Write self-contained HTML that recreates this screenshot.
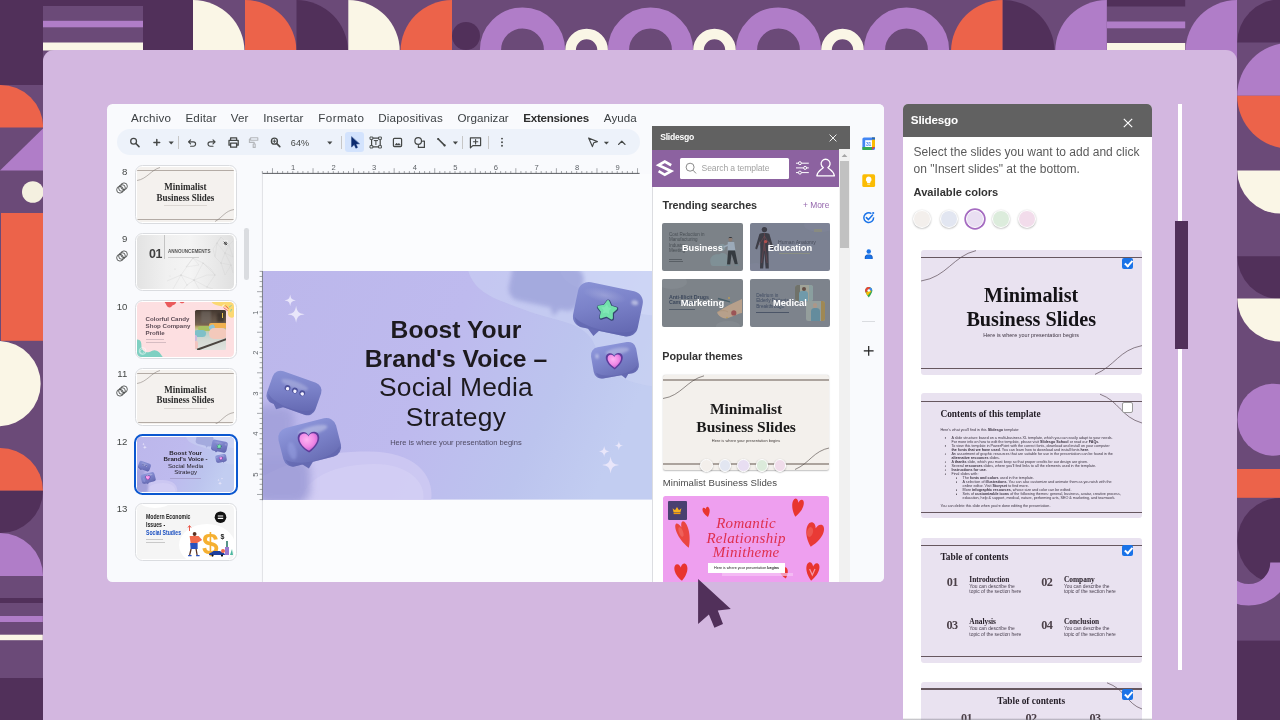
<!DOCTYPE html>
<html>
<head>
<meta charset="utf-8">
<title>Slidesgo add-on</title>
<style>
*{box-sizing:border-box;margin:0;padding:0}
html,body{width:1280px;height:720px;overflow:hidden;background:#6b4a78;font-family:"Liberation Sans",sans-serif;}
#stage{position:absolute;left:0;top:0;width:1280px;height:720px;overflow:hidden;will-change:transform}
.abs{position:absolute}
#bg{position:absolute;left:0;top:0}
#panel{position:absolute;left:43.1px;top:50px;width:1193.9px;height:680px;background:#d3b7e0;border-radius:11px 11px 0 0}
#card{position:absolute;left:107px;top:104px;width:777px;height:478px;background:#f9fafd;border-radius:5.5px;overflow:hidden}
#rpanel{position:absolute;left:903px;top:103.5px;width:249px;height:620px;background:#fff;border-radius:5px 5px 0 0;overflow:hidden}
.menu span{position:absolute;top:7.4px;font-size:11.6px;color:#3c4043;white-space:nowrap;letter-spacing:0.1px}
.tsep{position:absolute;top:32px;width:0.8px;height:13px;background:#c7c7c7}
.snum{position:absolute;font-size:9.6px;color:#444746;text-align:right}
.thumb{position:absolute;left:27.8px;width:101.8px;height:58.8px;border:0.9px solid #dadce0;border-radius:7.5px;background:#fff}
.thumb.sel{left:26.6px;width:104.2px;height:61.2px;border:2.1px solid #0b57d0;border-radius:8.5px}
.tin{position:absolute;left:1.6px;top:1.2px;width:96.8px;height:54.6px;border-radius:4.5px;overflow:hidden}
.thumb.sel .tin{left:1.6px;top:1.2px}
.mt{font-family:"Liberation Serif",serif;font-weight:bold;text-align:center;font-size:9.7px;line-height:10.6px;color:#2a2a2a;white-space:nowrap;transform:scaleX(0.93)}
.mt2{font-family:"Liberation Serif",serif;font-weight:bold;text-align:center;font-size:15.5px;line-height:18.3px;color:#1b1b1b;white-space:nowrap}
.cond{font-size:7.6px;font-weight:bold;white-space:nowrap;transform:scaleX(0.675);transform-origin:0 0}
.rnum{position:absolute;width:10px;text-align:center;font-size:7.6px;color:#5f6368}
.rnum.v{transform:rotate(-90deg);width:10px}
.stitle{text-align:center;font-size:24.7px;line-height:28.6px;color:#1d1a1f;white-space:nowrap}
.stitle .reg{font-size:26.4px;letter-spacing:0.25px}
.sh{font-size:10.8px;font-weight:bold;color:#333;white-space:nowrap;letter-spacing:-0.05px}
.tcard{position:absolute;width:80.8px;height:48px;border-radius:2px;overflow:hidden;margin-top:-0.2px}
.tcard > *:not(span){opacity:.8}
.tcard span{position:absolute;left:0;top:0.9px;width:100%;line-height:48px;text-align:center;font-size:9.3px;font-weight:bold;color:#fff;letter-spacing:-0.05px}
.cdot{position:absolute;top:355.3px;width:12.4px;height:12.4px;border-radius:50%;border:1.4px solid #fff;box-shadow:0 0.5px 1.5px rgba(0,0,0,0.3)}
.rom{font-family:"Liberation Serif",serif;font-style:italic;text-align:center;font-size:15px;line-height:14.8px;color:#df2f4e;white-space:nowrap;letter-spacing:0.3px}
.rdot{position:absolute;top:106.6px;width:18px;height:18px;border-radius:50%;border:1.8px solid #fff;box-shadow:0 0.6px 2px rgba(0,0,0,0.32)}
.rdot.selr{box-shadow:0 0 0 1.7px #a56cc1}
.rs{position:absolute;left:17.8px;width:220.8px;height:124.6px;border-radius:3px;background:#e9e2f0;overflow:hidden}
.rs .ln{position:absolute;left:0;width:100%;height:1.2px;background:#66575f}
.big{font-family:"Liberation Serif",serif;font-weight:bold;text-align:center;font-size:20.2px;line-height:23.8px;color:#141216;white-space:nowrap}
.ttl{font-family:"Liberation Serif",serif;font-weight:bold;font-size:9.4px;color:#231d26;white-space:nowrap}
.tiny{font-size:3.7px;color:#3a3240;white-space:nowrap;line-height:4px}
.nn{font-family:"Liberation Serif",serif;font-weight:bold;font-size:12.2px;letter-spacing:-0.6px;color:#4c4149}
.hh{font-family:"Liberation Serif",serif;font-weight:bold;font-size:7.4px;color:#2a222c;white-space:nowrap}
.dd{font-size:4.9px;line-height:5.5px;color:#4a4150;white-space:nowrap}
.cb{position:absolute;left:201.4px;width:11.2px;height:11.2px;border-radius:2px;background:#fff;border:1px solid #9a9a9a}
.cb.on{background:#1a73e8;border:none}
.cb.on:after{content:"";position:absolute;left:3.5px;top:1px;width:3.4px;height:6.4px;border:solid #fff;border-width:0 2px 2px 0;transform:rotate(42deg)}

</style>
</head>
<body>
<div id="stage">
<svg id="bg" width="1280" height="720" viewBox="0 0 1280 720">
<rect width="1280" height="720" fill="#6b4a78"/>
<!-- top strip -->
<rect x="0" y="0" width="43" height="85" fill="#51305a"/>
<rect x="43" y="0" width="100" height="6" fill="#51305a"/>
<rect x="43" y="20.8" width="100" height="6.5" fill="#b07dc8"/>
<rect x="43" y="42.5" width="100" height="8" fill="#faf6e6"/>
<rect x="143" y="0" width="50" height="52" fill="#51305a"/>
<path d="M193 0 A51.5 51.5 0 0 1 244.5 51.5 L193 51.5Z" fill="#faf6e6"/>
<path d="M245 0 A51.5 51.5 0 0 1 296.5 51.5 L245 51.5Z" fill="#ec634a"/>
<path d="M296.5 0 A51.5 51.5 0 0 1 348 51.5 L296.5 51.5Z" fill="#51305a"/>
<path d="M348.3 0 A51.5 51.5 0 0 1 399.8 51.5 L348.3 51.5Z" fill="#faf6e6"/>
<path d="M452 0 A51.5 51.5 0 0 0 400.5 51.5 L452 51.5Z" fill="#ec634a"/>
<circle cx="466" cy="36" r="14" fill="#51305a"/>
<g fill="none" stroke="#b07dc8" stroke-width="21.2">
<circle cx="522.5" cy="50" r="32"/><circle cx="650.5" cy="50" r="32"/><circle cx="778.5" cy="50" r="32"/><circle cx="906.5" cy="50" r="32"/>
</g>
<g fill="none" stroke="#faf6e6" stroke-width="10.6">
<circle cx="586.6" cy="50" r="16"/><circle cx="714.5" cy="50" r="16"/><circle cx="842.5" cy="50" r="16"/>
</g>
<path d="M1002.6 0 A51.5 51.5 0 0 0 951 51.5 L1002.6 51.5Z" fill="#ec634a"/>
<path d="M1002.8 0 A51.5 51.5 0 0 1 1054.5 51.5 L1002.8 51.5Z" fill="#51305a"/>
<path d="M1106.8 0 A51.5 51.5 0 0 0 1055.2 51.5 L1106.8 51.5Z" fill="#b07dc8"/>
<rect x="1107" y="0" width="78.2" height="6.5" fill="#51305a"/>
<rect x="1107" y="21.5" width="78.2" height="6.8" fill="#b07dc8"/>
<rect x="1107" y="43" width="78.2" height="8" fill="#faf6e6"/>
<path d="M1237 0 A51.5 51.5 0 0 0 1185.5 51.5 L1185.5 62 L1237 62Z" fill="#b07dc8"/>
<!-- right strip -->
<path d="M1280 -0.5 A43 43 0 0 0 1237.3 42.5 L1280 42.5Z" fill="#51305a"/>
<path d="M1237.2 95.8 A53 53 0 0 1 1343.2 95.8Z" fill="#b07dc8"/>
<path d="M1237.2 95.8 A53 53 0 0 0 1343.2 95.8Z" fill="#ec634a"/>
<path d="M1237.3 170.4 A43 43 0 0 0 1280.3 213.4 L1280.3 170.4Z" fill="#faf6e6"/>
<path d="M1237.3 256.2 A43 43 0 0 0 1280.3 299 L1280.3 256.2Z" fill="#51305a"/>
<path d="M1237.3 298.5 A43 43 0 0 0 1280.3 341.5 L1280.3 298.5Z" fill="#faf6e6"/>
<circle cx="1273.5" cy="419.7" r="36" fill="#b07dc8"/>
<rect x="1237" y="469" width="43" height="28.8" fill="#ec634a"/>
<path d="M1280.3 498 A43 43 0 0 0 1280.3 584Z" fill="#51305a"/>
<path d="M1216.5 562.5 A32.25 32.25 0 0 0 1281 562.5" fill="none" stroke="#b07dc8" stroke-width="21.5"/>
<rect x="1237" y="640.6" width="43" height="80" fill="#51305a"/>
<!-- left strip -->
<path d="M0 85 A42.8 42.8 0 0 1 43.3 127.6 L0 127.6Z" fill="#ec634a"/>
<path d="M43.5 128 L43.5 170.5 L0 170.5Z" fill="#b07dc8"/>
<circle cx="32.8" cy="192" r="10.8" fill="#f4f0e0"/>
<rect x="1" y="213" width="43" height="127.8" fill="#ec634a"/>
<path d="M0 341 A42.7 42.7 0 0 1 0 426.3Z" fill="#faf6e6"/>
<path d="M0 448 A42.8 42.8 0 0 1 43 490.7 L0 490.7Z" fill="#ec634a"/>
<path d="M0 490.7 L43 490.7 A42.5 42.5 0 0 1 0 533Z" fill="#51305a"/>
<path d="M0 533 A43 43 0 0 1 43 576 L0 576Z" fill="#b07dc8"/>
<rect x="0" y="598" width="42.8" height="5" fill="#51305a"/>
<rect x="0" y="616" width="42.8" height="6" fill="#b07dc8"/>
<rect x="0" y="634.7" width="42.8" height="5.5" fill="#faf6e6"/>
<rect x="0" y="678" width="44" height="42" fill="#51305a"/>
</svg>
<div id="panel"></div>
<!-- white line + dark bar -->
<div class="abs" style="left:1177.9px;top:104px;width:4.1px;height:565.5px;background:#fff"></div>
<div class="abs" style="left:1175px;top:221.2px;width:12.5px;height:127.6px;background:#51305a"></div>

<div id="card">
<!-- menu -->
<div class="menu">
<span style="left:24px;width:40.3px;letter-spacing:0.23px">Archivo</span>
<span style="left:78.4px;width:31.3px;letter-spacing:0.17px">Editar</span>
<span style="left:123.7px;width:18px;letter-spacing:0.15px">Ver</span>
<span style="left:156.2px;width:40.3px;letter-spacing:0.12px">Insertar</span>
<span style="left:211.3px;width:46px;letter-spacing:0.4px">Formato</span>
<span style="left:271.2px;width:64.8px;letter-spacing:0.19px">Diapositivas</span>
<span style="left:350.5px;width:51.3px;letter-spacing:0.04px">Organizar</span>
<span style="left:416.2px;width:65.8px;letter-spacing:-0.24px;font-weight:bold;color:#2e2e2e">Extensiones</span>
<span style="left:496.8px;width:33.4px;letter-spacing:0.06px">Ayuda</span>
</div>
<!-- toolbar -->
<div class="abs" style="left:10px;top:25.4px;width:523px;height:26px;border-radius:13px;background:#edf2fa"></div>
<div class="abs" style="left:237.8px;top:28.4px;width:19.5px;height:19.5px;border-radius:3px;background:#d3e3fd"></div>
<div class="tsep" style="left:71.2px"></div><div class="tsep" style="left:234.2px"></div><div class="tsep" style="left:355.3px"></div><div class="tsep" style="left:381px"></div>
<svg class="abs" style="left:0;top:24px" width="540" height="30" viewBox="0 0 540 30" fill="none" stroke="#444746" stroke-width="1.3" stroke-linecap="round" stroke-linejoin="round">
<!-- search -->
<circle cx="26.6" cy="13.2" r="2.9"/><path d="M28.9 15.5 L32 18.6" stroke-width="1.6"/>
<!-- plus + caret -->
<path d="M46.9 14.4 H52.7 M49.8 11.5 V17.3" stroke-width="1.45"/>
<path d="M61.6 13.6 L66.8 13.6 L64.2 16.4Z" fill="#444746" stroke="none"/>
<!-- undo -->
<path d="M81.6 13.8 H86.4 A2.2 2.2 0 0 1 86.4 18.2 H83.6 M83.6 11.8 L81.5 13.8 L83.6 15.8" stroke-width="1.15"/>
<!-- redo -->
<path d="M108 13.8 H103.2 A2.2 2.2 0 0 0 103.2 18.2 H106 M106 11.8 L108.1 13.8 L106 15.8" stroke-width="1.15"/>
<!-- print -->
<path d="M123.6 12.2 V9.8 H129.6 V12.2 M123.4 17.2 H122 V12.4 H131.2 V17.2 H129.8 M123.6 15.2 H129.6 V19.2 H123.6Z" stroke-width="1.3"/>
<!-- paint roller (disabled) -->
<path d="M143.6 9.8 H150.8 V12.2 H143.6Z M143.6 11 H142.4 V14.4 H147.2 V15.8 M146.2 16 H148.2 V19.4 H146.2Z" stroke="#b4b7bb" stroke-width="1.1"/>
<!-- zoom -->
<circle cx="167.4" cy="13.2" r="3"/><path d="M169.8 15.6 L172.8 18.6" stroke-width="1.6"/><path d="M165.9 13.2 H168.9 M167.4 11.7 V14.7" stroke-width="0.9"/>
<path d="M220.2 13.6 L225.4 13.6 L222.8 16.4Z" fill="#444746" stroke="none"/>
<!-- select arrow -->
<path d="M244.6 9 L244.6 19 L247.2 16.6 L248.9 20.2 L250.5 19.4 L248.9 16 L252.2 15.8Z" fill="#0b2a6f" stroke="#0b2a6f" stroke-width="0.5"/>
<!-- text box -->
<path d="M264.6 10.2 H273.2 V18.8 H264.6Z" stroke-width="1.2"/>
<g fill="#edf2fa" stroke-width="0.9"><rect x="263.4" y="9" width="2.4" height="2.4"/><rect x="272" y="9" width="2.4" height="2.4"/><rect x="263.4" y="17.6" width="2.4" height="2.4"/><rect x="272" y="17.6" width="2.4" height="2.4"/></g>
<path d="M267.2 12.6 H270.6 M268.9 12.6 V16.6" stroke-width="1"/>
<!-- image -->
<rect x="286.4" y="10.4" width="8.2" height="8.2" rx="1" stroke-width="1.2"/><path d="M288 17 L289.6 15 L290.8 16.3 L292 15.2 L293.4 17Z" fill="#444746" stroke-width="0.4"/>
<!-- shapes -->
<circle cx="311.2" cy="13" r="3.3" stroke-width="1.2"/><path d="M315.6 13.2 H317.4 V19.4 H311.4 V17.6" stroke-width="1.2"/>
<!-- line -->
<path d="M331.2 11 L337.6 17.4" stroke-width="1.6"/><circle cx="331.2" cy="11" r="1.1" fill="#444746" stroke="none"/><circle cx="337.6" cy="17.4" r="1.1" fill="#444746" stroke="none"/>
<path d="M345.8 13.6 L351 13.6 L348.4 16.4Z" fill="#444746" stroke="none"/>
<!-- comment plus -->
<path d="M363.4 9.8 H373.6 V17.6 H365.8 L363.4 19.8Z" stroke-width="1.2"/><path d="M366.4 13.7 H370.8 M368.6 11.5 V15.9" stroke-width="1.1"/>
<!-- more -->
<g fill="#444746" stroke="none"><circle cx="395" cy="10.6" r="0.95"/><circle cx="395" cy="14.2" r="0.95"/><circle cx="395" cy="17.8" r="0.95"/></g>
<!-- pointer -->
<path d="M481.6 10 L490.4 13.6 L486.8 14.8 L485.4 18.6Z" stroke-width="1.15"/>
<path d="M496.8 13.8 L502 13.8 L499.4 16.6Z" fill="#444746" stroke="none"/>
<path d="M511.6 16.4 L514.8 13.2 L518 16.4" stroke-width="1.3"/>
</svg>
<div class="abs" style="left:183.8px;top:33.6px;width:19px;font-size:9.1px;color:#444746;letter-spacing:0.1px">64%</div>
<div class="snum" style="left:0.3px;top:61.7px;width:20px">8</div>
<svg class="abs" style="left:7.7px;top:77.0px" width="14" height="14" viewBox="-7 -7 14 14" fill="none" stroke="#444746" stroke-width="0.85"><circle cx="-2" cy="1.75" r="3.35"/><circle cx="0" cy="0" r="3.35"/><circle cx="2" cy="-1.75" r="3.35"/></svg>
<div class="snum" style="left:0.3px;top:129.2px;width:20px">9</div>
<svg class="abs" style="left:7.7px;top:144.5px" width="14" height="14" viewBox="-7 -7 14 14" fill="none" stroke="#444746" stroke-width="0.85"><circle cx="-2" cy="1.75" r="3.35"/><circle cx="0" cy="0" r="3.35"/><circle cx="2" cy="-1.75" r="3.35"/></svg>
<div class="snum" style="left:0.3px;top:197.0px;width:20px">10</div>
<div class="snum" style="left:0.3px;top:264.4px;width:20px">11</div>
<svg class="abs" style="left:7.7px;top:279.7px" width="14" height="14" viewBox="-7 -7 14 14" fill="none" stroke="#444746" stroke-width="0.85"><circle cx="-2" cy="1.75" r="3.35"/><circle cx="0" cy="0" r="3.35"/><circle cx="2" cy="-1.75" r="3.35"/></svg>
<div class="snum" style="left:0.3px;top:331.7px;width:20px">12</div>
<div class="snum" style="left:0.3px;top:399.2px;width:20px">13</div>
<div class="thumb" style="top:61.0px">
<div class="tin" style="background:#f4f1ee">
<div class="abs" style="left:0;top:3.2px;width:100%;height:0.8px;background:#b3aba5"></div>
<div class="abs" style="left:0;top:52px;width:100%;height:0.8px;background:#b3aba5"></div>
<svg class="abs" style="left:0;top:0" width="97" height="55" viewBox="0 0 97 55" fill="none" stroke="#857c77" stroke-width="0.55"><path d="M0 13.5 C10 12 14 3 23 0.5"/><path d="M78 54.5 C86 50 88 44 97 42.5"/></svg>
<div class="abs mt" style="left:0;top:14.9px;width:100%">Minimalist<br>Business Slides</div>
<div class="abs" style="left:27px;top:38.2px;width:43px;height:0.7px;background:#dcd7d3"></div>
</div>
</div>
<div class="thumb" style="top:128.5px">
<div class="tin" style="background:linear-gradient(90deg,#e3e3e3 0%,#f0f0f0 30%,#f4f4f4 55%,#e9e9e9 80%,#e0e0e0 100%)">
<svg class="abs" style="left:0;top:0" width="97" height="55" viewBox="0 0 97 55" fill="none" stroke="#c9c9c9" stroke-width="0.25"><path d="M30 46 L44 40 L57 45 L66 28 L56 23 L44 40 M57 45 L70 52 L78 40 L66 28 L74 34 L78 40 L70 40 L57 45 M49 32 L56 23 L62 30 L49 32 M36 54 L44 40 L50 50 L57 45 L62 54 M70 52 L76 54 M50 50 L46 55"/><path d="M76 14 L84 2 L92 10 L96 6 M84 2 L80 8 L88 18 L92 10 L96 22 L88 18 L84 28 L78 22 L80 8 M88 18 L94 30 L84 28 L88 40 L94 30 L96 38 M76 14 L78 22"/><g fill="#bdbdbd" stroke="none"><circle cx="44" cy="40" r="0.5"/><circle cx="57" cy="45" r="0.5"/><circle cx="66" cy="28" r="0.45"/><circle cx="56" cy="23" r="0.4"/><circle cx="70" cy="52" r="0.45"/><circle cx="78" cy="40" r="0.45"/><circle cx="50" cy="50" r="0.4"/><circle cx="88" cy="18" r="0.45"/><circle cx="84" cy="28" r="0.45"/><circle cx="94" cy="30" r="0.45"/><circle cx="80" cy="8" r="0.4"/><circle cx="38" cy="34" r="0.4"/><circle cx="33" cy="41" r="0.35"/></g></svg>
<div class="abs" style="left:26.7px;top:0.4px;width:0.6px;height:23.6px;background:#c4c4c4"></div>
<div class="abs" style="left:11.7px;top:12.2px;font-size:12.4px;font-weight:bold;color:#3f3f3f;letter-spacing:-0.45px">01</div>
<div class="abs" id="ann" style="left:30.5px;top:13.5px;font-size:5.5px;font-weight:bold;color:#555;white-space:nowrap;transform:scaleX(0.832);transform-origin:0 0">ANNOUNCEMENTS</div>
<div class="abs" style="left:30.8px;top:22.7px;width:30.6px;height:0.45px;background:#cfcfcf"></div>
<div class="abs" style="left:85.2px;top:5.8px;width:5.6px;height:5.6px;background:#ececec"></div>
<svg class="abs" style="left:85.5px;top:6px" width="5" height="5" viewBox="0 0 6 6" fill="none" stroke="#333" stroke-width="1"><path d="M0.8 0.8 L5 5 M1.2 3 L3.2 1 L4.8 2.8 L3 4.6Z"/></svg>
</div>
</div>
<div class="thumb" style="top:196.3px">
<div class="tin" style="background:#fddfe1">
<svg class="abs" style="left:0;top:0" width="97" height="55" viewBox="0 0 97 55"><path d="M27.6 0 H39.2 C38.6 3 36 2.6 34.6 4.4 C33 6.2 30.6 5.4 29.6 3.4 C29 2 28.2 1.2 27.6 0Z" fill="#ea5a5c"/><path d="M42.6 0 H47.4 C46.8 1.6 43.6 1.8 42.6 0Z" fill="#ea5a5c"/><path d="M74.6 0 H97 V14.4 C95.6 16.4 92.6 16 91.4 13.6 C90.4 11.2 91.6 8.4 89.4 6 C86.6 3.4 77.6 4.6 74.6 0Z" fill="#fbd873"/><path d="M0 37.6 C3.4 37.4 4.6 40.4 4.4 43.4 C4.2 47.4 7.4 50.4 11.4 50.2 C14.4 50 15.4 48 18.4 48.4 C22 48.8 23.6 52 25.8 55 H0Z" fill="#7fd0c2"/><circle cx="5.6" cy="49" r="3.4" fill="none" stroke="#fff" stroke-width="0.6" opacity="0.9"/><circle cx="5.2" cy="49.4" r="2" fill="none" stroke="#fff" stroke-width="0.5" opacity="0.8"/><path d="M86.6 5.6 L90.6 8.6 M88.4 3.6 L91.6 6.6" stroke="#e8505a" stroke-width="0.9"/><path d="M92 5.2 L94.6 3.4 M93.6 9.6 L94.6 7" stroke="#6fc8b8" stroke-width="0.8"/><path d="M85 4.4 L87.4 2.6" stroke="#fff" stroke-width="0.8"/></svg>
<div class="abs" style="left:8.2px;top:13.9px;font-size:6.15px;line-height:6.9px;font-weight:bold;color:#5e4d57;letter-spacing:-0.02px;white-space:nowrap">Colorful Candy<br>Shop Company<br>Profile</div>
<div class="abs" style="left:8.5px;top:37px;width:18px;height:0.6px;background:#d6bcc2"></div>
<div class="abs" style="left:8.5px;top:39.7px;width:20px;height:0.6px;background:#d6bcc2"></div>
<div class="abs" style="left:57.5px;top:7.5px;width:31.6px;height:40.1px;border-radius:1.5px;overflow:hidden;background:linear-gradient(180deg,#43372f 0%,#5e4f44 18%,#6b5b4e 30%,#7a6650 37%,#b9a86a 42%,#c8c8a0 50%,#bcd2cc 60%,#d2d8d2 72%,#dfe2de 100%)">
<div class="abs" style="left:6px;top:1px;width:10px;height:12px;background:#77706a;opacity:0.55;filter:blur(1px)"></div>
<div class="abs" style="left:22px;top:3px;width:7px;height:9px;background:#2e2622;opacity:0.6;filter:blur(0.8px)"></div>
<div class="abs" style="left:27px;top:3px;width:1px;height:5px;background:#e8c04a"></div>
<div class="abs" style="left:14px;top:13.4px;width:18px;height:4.4px;border-radius:2px;background:#f0b050"></div>
<div class="abs" style="left:3px;top:15.6px;width:14px;height:5px;border-radius:2.4px;background:#a9c062"></div>
<div class="abs" style="left:-1px;top:19.6px;width:12px;height:7.6px;border-radius:3.6px;background:#7ec0c8"></div>
<div class="abs" style="left:14.6px;top:14.8px;width:5.6px;height:5.4px;border-radius:2.7px;background:#8fc4d8;transform:rotate(-30deg)"></div>
<div class="abs" style="left:14px;top:17.8px;width:18px;height:11px;border-radius:5px;background:#f3c9bb"></div>
<div class="abs" style="left:-1px;top:25px;width:3.6px;height:6px;border-radius:1.8px;background:#cbb8dc"></div>
<div class="abs" style="left:-1px;top:31px;width:4px;height:8px;border-radius:2px;background:#f3c4c0"></div>
<div class="abs" style="left:1px;top:33.4px;width:34px;height:1.5px;background:#4b4540;transform:rotate(-20deg)"></div>
</div>
</div>
</div>
<div class="thumb" style="top:263.7px">
<div class="tin" style="background:#f4f1ee">
<div class="abs" style="left:0;top:3.2px;width:100%;height:0.8px;background:#b3aba5"></div>
<div class="abs" style="left:0;top:52px;width:100%;height:0.8px;background:#b3aba5"></div>
<svg class="abs" style="left:0;top:0" width="97" height="55" viewBox="0 0 97 55" fill="none" stroke="#857c77" stroke-width="0.55"><path d="M0 13.5 C10 12 14 3 23 0.5"/><path d="M78 54.5 C86 50 88 44 97 42.5"/></svg>
<div class="abs mt" style="left:0;top:14.9px;width:100%">Minimalist<br>Business Slides</div>
<div class="abs" style="left:27px;top:38.2px;width:43px;height:0.7px;background:#dcd7d3"></div>
</div>
</div>
<div class="thumb sel" style="top:329.8px">
<div class="tin" style="background:linear-gradient(100deg,#bbb6eb 0%,#beb9ee 45%,#c3c6f0 100%)">
<svg class="abs" style="left:0;top:0" width="96.8" height="54.6" viewBox="262.8 271 405.3 228.6" preserveAspectRatio="none">
<rect x="262.8" y="271" width="406" height="228.6" fill="url(#sbg)"/>
<!-- soft waves -->
<path d="M262.8 476 C290 462 320 451.5 368 451.5 C414 451.5 434 474 431 500 H262.8Z" fill="#cfcaf2" opacity="0.8"/><path d="M300 500 C306 478 334 464 374 464 C408 464 426 482 423 500Z" fill="#d9d5f7" opacity="0.45"/>
<path d="M468 271 C476 296 500 300 530 312 C560 322 580 322 592 340 C602 360 606 376 640 384 C655 388 662 386 669 386 V271Z" fill="#cbd3f4" opacity="0.5"/>
<path d="M560 271 C566 290 590 288 604 300 C622 316 640 312 669 318 V271Z" fill="#d3dbf7" opacity="0.55"/>
<!-- ghost blurred shapes -->
<g filter="url(#blur6)" opacity="0.78"><rect x="252" y="406" width="42" height="62" rx="12" fill="#9e9dd8"/><rect x="254" y="458" width="56" height="46" rx="14" fill="#9897d4"/></g>
<g filter="url(#blur3)" opacity="0.8"><rect x="-36" y="-22" width="72" height="44" rx="12" fill="#9da3da" transform="translate(546 284) rotate(12)"/><path d="M548 300 L553 316 L566 303Z" fill="#9da3da"/></g>
<!-- sparkles -->
<g fill="#e9e6fa"><path d="M290 294.6 C290.6 298.6 291.6 299.8 295.6 300.4 C291.6 301 290.6 302.2 290 306.2 C289.4 302.2 288.4 301 284.4 300.4 C288.4 299.8 289.4 298.6 290 294.6Z"/>
<path d="M295.9 305.8 C296.8 311.8 298.4 313.4 304.4 314.3 C298.4 315.2 296.8 316.8 295.9 322.8 C295 316.8 293.4 315.2 287.4 314.3 C293.4 313.4 295 311.8 295.9 305.8Z"/>
<path transform="translate(0.4 1.3)" d="M618.3 439.6 C618.8 443 619.6 443.8 623 444.3 C619.6 444.8 618.8 445.6 618.3 449 C617.8 445.6 617 444.8 613.6 444.3 C617 443.8 617.8 443 618.3 439.6Z"/>
<path transform="translate(0 1.3)" d="M604 444.8 C604.6 448.6 605.6 449.6 609.4 450.2 C605.6 450.8 604.6 451.8 604 455.6 C603.4 451.8 602.4 450.8 598.6 450.2 C602.4 449.6 603.4 448.6 604 444.8Z"/>
<path d="M610.4 456.6 C611.3 462.6 612.9 464.2 618.9 465.1 C612.9 466 611.3 467.6 610.4 473.6 C609.5 467.6 607.9 466 601.9 465.1 C607.9 464.2 609.5 462.6 610.4 456.6Z"/></g>
<!-- star bubble -->
<g transform="translate(607.7 309.3) rotate(11.8)">
<path d="M-19 20 L-8.7 29 L-3 21Z" fill="#676cb5"/>
<rect x="-33" y="-23" width="66" height="46" rx="11" fill="url(#bub)"/>
<path d="M-31 14 C-20 24 24 24 31 14 C28 22 24 23 22 23 H-22 C-24 23 -28 22 -31 14Z" fill="#5d62ab" opacity="0.55"/>
<ellipse cx="-6" cy="-13" rx="22" ry="7" fill="url(#hl)" opacity="0.35"/>
<ellipse cx="25" cy="-12" rx="3.4" ry="2.6" fill="#fff" opacity="0.45" filter="url(#blur1)"/>
<g transform="translate(-0.6 1.2) rotate(-6)"><path d="M0.00 -9.00 L2.88 -3.96 L8.56 -2.78 L4.66 1.51 L5.29 7.28 L0.00 4.90 L-5.29 7.28 L-4.66 1.51 L-8.56 -2.78 L-2.88 -3.96Z" fill="#34456f" stroke="#34456f" stroke-width="4.4" stroke-linejoin="round" transform="translate(0.3 0.4)"/><path d="M0.00 -9.00 L2.88 -3.96 L8.56 -2.78 L4.66 1.51 L5.29 7.28 L0.00 4.90 L-5.29 7.28 L-4.66 1.51 L-8.56 -2.78 L-2.88 -3.96Z" fill="#72e0ab" stroke="#72e0ab" stroke-width="2.6" stroke-linejoin="round"/><path d="M0.00 -9.00 L2.88 -3.96 L8.56 -2.78 L4.66 1.51 L5.29 7.28 L0.00 4.90 L-5.29 7.28 L-4.66 1.51 L-8.56 -2.78 L-2.88 -3.96Z" fill="#8ef0c0" opacity="0.5" transform="translate(-0.8 -0.8) scale(0.6)"/></g>
</g>
<!-- heart bubble right -->
<g transform="translate(614.75 360.25) rotate(-9.9)">
<path d="M2.5 14.5 L7.5 19.8 L12.5 13.5Z" fill="#656ab2"/>
<rect x="-22.9" y="-15.9" width="45.8" height="31.8" rx="8" fill="url(#bub2)"/>
<path d="M-21 9 C-12 17 14 17 21 9 C19 15 17 15.9 15 15.9 H-15 C-17 15.9 -19 15 -21 9Z" fill="#5d62ab" opacity="0.5"/>
<ellipse cx="4" cy="-8.5" rx="12" ry="3.2" fill="#fff" opacity="0.28" filter="url(#blur1)"/>
<ellipse cx="-17" cy="-7" rx="1.6" ry="2.6" fill="#fff" opacity="0.45" filter="url(#blur1)"/>
<g transform="translate(-0.6 0.4) rotate(8)"><path d="M0 7.4 C-9 1.4 -8.6 -5.8 -4 -6.4 C-1.8 -6.6 -0.5 -5.2 0 -4 C0.5 -5.2 1.8 -6.6 4 -6.4 C8.6 -5.8 9 1.4 0 7.4Z" fill="#5d3c9a" transform="scale(1.18)"/><path d="M0 7.4 C-9 1.4 -8.6 -5.8 -4 -6.4 C-1.8 -6.6 -0.5 -5.2 0 -4 C0.5 -5.2 1.8 -6.6 4 -6.4 C8.6 -5.8 9 1.4 0 7.4Z" fill="url(#heartg)" transform="scale(0.94)"/></g>
</g>
<!-- dots bubble -->
<g transform="translate(293.8 393) rotate(19.5)">
<path d="M-24 8 L-11.5 21.2 L-4 16Z" fill="#666bb3"/>
<rect x="-25.7" y="-17" width="51.4" height="34" rx="8.5" fill="url(#bub)"/>
<path d="M-24 9 C-14 18 16 18 24 9 C22 16 19 17 17 17 H-17 C-19 17 -22 16 -24 9Z" fill="#5d62ab" opacity="0.5"/>
<ellipse cx="-2" cy="-8" rx="14" ry="3.4" fill="#fff" opacity="0.22" filter="url(#blur1)"/>
<g fill="#4d5199"><circle cx="-7.8" cy="-2.6" r="2.9"/><circle cx="0" cy="-2.6" r="2.9"/><circle cx="7.8" cy="-2.6" r="2.9"/></g>
<g fill="#f3f1ff"><circle cx="-7.5" cy="-1.9" r="1.7"/><circle cx="0.3" cy="-1.9" r="1.7"/><circle cx="8.1" cy="-1.9" r="1.7"/></g>
</g>
<!-- heart bubble left -->
<g transform="translate(309.5 442.3) rotate(-14.3)">
<path d="M-15 17 L-7.3 25.2 L0 18Z" fill="#656ab2"/>
<rect x="-29.7" y="-19.75" width="59.4" height="39.5" rx="10" fill="url(#bub2)"/>
<path d="M-28 11 C-16 22 18 22 28 11 C26 18.5 23 19.75 20 19.75 H-20 C-23 19.75 -26 18.5 -28 11Z" fill="#5d62ab" opacity="0.5"/>
<ellipse cx="6" cy="-11" rx="15" ry="4" fill="#fff" opacity="0.3" filter="url(#blur1)"/>
<ellipse cx="-19" cy="4" rx="4" ry="9" fill="#9aa3e4" opacity="0.5" filter="url(#blur1)"/>
<g transform="translate(-0.8 -1) rotate(12)"><path d="M0 7.4 C-9 1.4 -8.6 -5.8 -4 -6.4 C-1.8 -6.6 -0.5 -5.2 0 -4 C0.5 -5.2 1.8 -6.6 4 -6.4 C8.6 -5.8 9 1.4 0 7.4Z" fill="#5d3c9a" transform="scale(1.5)"/><path d="M0 7.4 C-9 1.4 -8.6 -5.8 -4 -6.4 C-1.8 -6.6 -0.5 -5.2 0 -4 C0.5 -5.2 1.8 -6.6 4 -6.4 C8.6 -5.8 9 1.4 0 7.4Z" fill="url(#heartg)" transform="scale(1.26)"/></g>
</g>
</svg>
<div class="abs" style="left:0;top:12.7px;width:100%;text-align:center;font-size:6.15px;line-height:6.5px;color:#26222b;white-space:nowrap"><b>Boost Your<br>Brand's Voice -</b><br>Social Media<br>Strategy</div>
<div class="abs" style="left:33px;top:41.3px;width:31px;height:0.6px;background:#a7a1cf"></div>
</div>
</div>
<div class="thumb" style="top:398.5px">
<div class="tin" style="background:#f5f5f5">
<svg class="abs" style="left:0;top:0" width="97" height="55" viewBox="0 0 97 55">
<ellipse cx="70" cy="40" rx="28" ry="21" fill="#fff"/><ellipse cx="18" cy="-2" rx="14" ry="5" fill="#fff"/>
<circle cx="83.5" cy="12.2" r="5.8" fill="#111"/><path d="M80.8 11 H86.2 M80.8 13.4 H86.2" stroke="#fff" stroke-width="1.1"/>
<text x="73.4" y="48.6" text-anchor="middle" font-family="Liberation Sans" font-weight="bold" font-size="30" fill="#f5b031">$</text>
<text x="83.5" y="34" font-family="Liberation Sans" font-weight="bold" font-size="7" fill="#222">$</text>
<g transform="translate(-3.4 0)"><circle cx="61" cy="29" r="1.9" fill="#5a3323"/><path d="M56 31 H65 L68.5 35 L63.5 38 H57Z" fill="#f26a4b"/><path d="M56.5 38 H64 V44 H57Z" fill="#2a52be"/><path d="M57.5 44 L56 50 M62.5 44 L63.5 50" stroke="#5a3323" stroke-width="1.3"/><path d="M54.5 50.6 H58 M62.5 50.6 H66" stroke="#2a52be" stroke-width="1.2"/></g>
<path d="M72 50 C72 47.5 75 47.8 76.5 46 H83 C84.5 47.6 88 47.5 88 50Z" fill="#1d3f9e"/><circle cx="75.5" cy="50.6" r="1.1" fill="#111"/><circle cx="85" cy="50.6" r="1.1" fill="#111"/>
<path d="M88 42 H92 V50 H88Z" fill="#9a7ad0"/><path d="M90 36 V42" stroke="#2c7a6a" stroke-width="1.6"/><path d="M93 50 L95 44 L96 50Z" fill="#4cb8a0"/><path d="M52.5 26 V21 M51 22.5 L52.5 20.5 L54 22.5" stroke="#e84a3a" stroke-width="0.9" fill="none"/><circle cx="86" cy="46" r="2" fill="#f26a4b"/>
</svg>
<div class="abs cond" style="left:8.6px;top:7.8px;color:#222">Modern Economic</div>
<div class="abs cond" style="left:8.6px;top:15.6px;color:#222">Issues -</div>
<div class="abs cond" style="left:8.6px;top:23.4px;color:#1a4fc0">Social Studies</div>
<div class="abs" style="left:8.8px;top:34.4px;width:17px;height:0.6px;background:#c9c9c9"></div>
<div class="abs" style="left:8.8px;top:37.4px;width:19px;height:0.6px;background:#c9c9c9"></div>
</div>
</div>
<div class="abs" style="left:137px;top:124.4px;width:4.5px;height:51.2px;border-radius:2.3px;background:#dadce0"></div>
<div class="abs" style="left:155.8px;top:69.9px;width:400px;height:420px;background:#fbfcfe"></div>
<svg class="abs" style="left:0;top:0" width="560" height="480" viewBox="0 0 560 480" fill="none" stroke="#5f6368" stroke-width="0.55">
<path d="M155.34 69.4 v-2.4 M160.41 69.4 v-2.4 M165.48 69.4 v-5.2 M170.55 69.4 v-2.4 M175.62 69.4 v-2.4 M180.69 69.4 v-2.4 M185.76 69.4 v-2.4 M190.83 69.4 v-2.4 M195.90 69.4 v-2.4 M200.97 69.4 v-2.4 M206.04 69.4 v-5.2 M211.11 69.4 v-2.4 M216.18 69.4 v-2.4 M221.25 69.4 v-2.4 M226.32 69.4 v-2.4 M231.39 69.4 v-2.4 M236.46 69.4 v-2.4 M241.53 69.4 v-2.4 M246.60 69.4 v-5.2 M251.67 69.4 v-2.4 M256.74 69.4 v-2.4 M261.81 69.4 v-2.4 M266.88 69.4 v-2.4 M271.95 69.4 v-2.4 M277.02 69.4 v-2.4 M282.09 69.4 v-2.4 M287.16 69.4 v-5.2 M292.23 69.4 v-2.4 M297.30 69.4 v-2.4 M302.37 69.4 v-2.4 M307.44 69.4 v-2.4 M312.51 69.4 v-2.4 M317.58 69.4 v-2.4 M322.65 69.4 v-2.4 M327.72 69.4 v-5.2 M332.79 69.4 v-2.4 M337.86 69.4 v-2.4 M342.93 69.4 v-2.4 M348.00 69.4 v-2.4 M353.07 69.4 v-2.4 M358.14 69.4 v-2.4 M363.21 69.4 v-2.4 M368.28 69.4 v-5.2 M373.35 69.4 v-2.4 M378.42 69.4 v-2.4 M383.49 69.4 v-2.4 M388.56 69.4 v-2.4 M393.63 69.4 v-2.4 M398.70 69.4 v-2.4 M403.77 69.4 v-2.4 M408.84 69.4 v-5.2 M413.91 69.4 v-2.4 M418.98 69.4 v-2.4 M424.05 69.4 v-2.4 M429.12 69.4 v-2.4 M434.19 69.4 v-2.4 M439.26 69.4 v-2.4 M444.33 69.4 v-2.4 M449.40 69.4 v-5.2 M454.47 69.4 v-2.4 M459.54 69.4 v-2.4 M464.61 69.4 v-2.4 M469.68 69.4 v-2.4 M474.75 69.4 v-2.4 M479.82 69.4 v-2.4 M484.89 69.4 v-2.4 M489.96 69.4 v-5.2 M495.03 69.4 v-2.4 M500.10 69.4 v-2.4 M505.17 69.4 v-2.4 M510.24 69.4 v-2.4 M515.31 69.4 v-2.4 M520.38 69.4 v-2.4 M525.45 69.4 v-2.4 M530.52 69.4 v-5.2"/>
<path d="M155.1 69.4 H532.6" stroke-width="0.9" stroke="#4a4d51"/>
<path d="M155.4 167.40 h-2.8 M155.4 172.47 h-2.8 M155.4 177.54 h-2.8 M155.4 182.61 h-2.8 M155.4 187.68 h-5.4 M155.4 192.75 h-2.8 M155.4 197.82 h-2.8 M155.4 202.89 h-2.8 M155.4 207.96 h-2.8 M155.4 213.03 h-2.8 M155.4 218.10 h-2.8 M155.4 223.17 h-2.8 M155.4 228.24 h-5.4 M155.4 233.31 h-2.8 M155.4 238.38 h-2.8 M155.4 243.45 h-2.8 M155.4 248.52 h-2.8 M155.4 253.59 h-2.8 M155.4 258.66 h-2.8 M155.4 263.73 h-2.8 M155.4 268.80 h-5.4 M155.4 273.87 h-2.8 M155.4 278.94 h-2.8 M155.4 284.01 h-2.8 M155.4 289.08 h-2.8 M155.4 294.15 h-2.8 M155.4 299.22 h-2.8 M155.4 304.29 h-2.8 M155.4 309.36 h-5.4 M155.4 314.43 h-2.8 M155.4 319.50 h-2.8 M155.4 324.57 h-2.8 M155.4 329.64 h-2.8 M155.4 334.71 h-2.8 M155.4 339.78 h-2.8 M155.4 344.85 h-2.8 M155.4 349.92 h-5.4 M155.4 354.99 h-2.8 M155.4 360.06 h-2.8 M155.4 365.13 h-2.8 M155.4 370.20 h-2.8 M155.4 375.27 h-2.8 M155.4 380.34 h-2.8 M155.4 385.41 h-2.8 M155.4 390.48 h-5.4 M155.4 395.55 h-2.8"/>
<path d="M155.45 69.4 V167" stroke="#d5d7db" stroke-width="0.7"/>
<path d="M155.45 167 V396.4" stroke="#6a6d78" stroke-width="0.9"/>
<path d="M155.45 396.4 V480" stroke="#d5d7db" stroke-width="0.7"/>
</svg>
<div class="rnum" style="left:181.1px;top:58.6px">1</div>
<div class="rnum" style="left:221.7px;top:58.6px">2</div>
<div class="rnum" style="left:262.2px;top:58.6px">3</div>
<div class="rnum" style="left:302.8px;top:58.6px">4</div>
<div class="rnum" style="left:343.4px;top:58.6px">5</div>
<div class="rnum" style="left:383.9px;top:58.6px">6</div>
<div class="rnum" style="left:424.5px;top:58.6px">7</div>
<div class="rnum" style="left:465.0px;top:58.6px">8</div>
<div class="rnum" style="left:505.6px;top:58.6px">9</div>
<div class="rnum v" style="left:143.2px;top:203.8px">1</div>
<div class="rnum v" style="left:143.2px;top:244.3px">2</div>
<div class="rnum v" style="left:143.2px;top:284.9px">3</div>
<div class="rnum v" style="left:143.2px;top:325.4px">4</div>
<div class="rnum v" style="left:143.2px;top:366.0px">5</div><!-- main slide (page coords via viewBox) -->
<svg class="abs" style="left:155.8px;top:167px" width="406" height="228.6" viewBox="262.8 271 406 228.6">
<defs>
<linearGradient id="sbg" x1="0" y1="0" x2="1" y2="0.25"><stop offset="0" stop-color="#bcb7eb"/><stop offset="0.5" stop-color="#bebaee"/><stop offset="0.8" stop-color="#bcc4ee"/><stop offset="1" stop-color="#c2cdf1"/></linearGradient>
<linearGradient id="bub" x1="0" y1="0" x2="0.6" y2="1"><stop offset="0" stop-color="#8a93d6"/><stop offset="0.5" stop-color="#7b82c9"/><stop offset="1" stop-color="#666bb4"/></linearGradient>
<linearGradient id="bub2" x1="0.2" y1="0" x2="0.5" y2="1"><stop offset="0" stop-color="#8e97db"/><stop offset="0.55" stop-color="#7a81c8"/><stop offset="1" stop-color="#6a6fb6"/></linearGradient>
<radialGradient id="hl" cx="0.5" cy="0.5" r="0.5"><stop offset="0" stop-color="#fff" stop-opacity="0.55"/><stop offset="1" stop-color="#fff" stop-opacity="0"/></radialGradient>
<radialGradient id="heartg" cx="0.4" cy="0.35" r="0.7"><stop offset="0" stop-color="#ffb3f2"/><stop offset="0.6" stop-color="#f088e6"/><stop offset="1" stop-color="#c861cf"/></radialGradient>
<filter id="blur6" x="-30%" y="-30%" width="160%" height="160%"><feGaussianBlur stdDeviation="4"/></filter>
<filter id="blur3" x="-30%" y="-30%" width="160%" height="160%"><feGaussianBlur stdDeviation="2.2"/></filter>
<filter id="blur1" x="-30%" y="-30%" width="160%" height="160%"><feGaussianBlur stdDeviation="0.8"/></filter>
</defs>
<rect x="262.8" y="271" width="406" height="228.6" fill="url(#sbg)"/>
<!-- soft waves -->
<path d="M262.8 476 C290 462 320 451.5 368 451.5 C414 451.5 434 474 431 500 H262.8Z" fill="#cfcaf2" opacity="0.8"/><path d="M300 500 C306 478 334 464 374 464 C408 464 426 482 423 500Z" fill="#d9d5f7" opacity="0.45"/>
<path d="M468 271 C476 296 500 300 530 312 C560 322 580 322 592 340 C602 360 606 376 640 384 C655 388 662 386 669 386 V271Z" fill="#cbd3f4" opacity="0.5"/>
<path d="M560 271 C566 290 590 288 604 300 C622 316 640 312 669 318 V271Z" fill="#d3dbf7" opacity="0.55"/>
<!-- ghost blurred shapes -->
<g filter="url(#blur6)" opacity="0.78"><rect x="252" y="406" width="42" height="62" rx="12" fill="#9e9dd8"/><rect x="254" y="458" width="56" height="46" rx="14" fill="#9897d4"/></g>
<g filter="url(#blur3)" opacity="0.8"><rect x="-36" y="-22" width="72" height="44" rx="12" fill="#9da3da" transform="translate(546 284) rotate(12)"/><path d="M548 300 L553 316 L566 303Z" fill="#9da3da"/></g>
<!-- sparkles -->
<g fill="#e9e6fa"><path d="M290 294.6 C290.6 298.6 291.6 299.8 295.6 300.4 C291.6 301 290.6 302.2 290 306.2 C289.4 302.2 288.4 301 284.4 300.4 C288.4 299.8 289.4 298.6 290 294.6Z"/>
<path d="M295.9 305.8 C296.8 311.8 298.4 313.4 304.4 314.3 C298.4 315.2 296.8 316.8 295.9 322.8 C295 316.8 293.4 315.2 287.4 314.3 C293.4 313.4 295 311.8 295.9 305.8Z"/>
<path transform="translate(0.4 1.3)" d="M618.3 439.6 C618.8 443 619.6 443.8 623 444.3 C619.6 444.8 618.8 445.6 618.3 449 C617.8 445.6 617 444.8 613.6 444.3 C617 443.8 617.8 443 618.3 439.6Z"/>
<path transform="translate(0 1.3)" d="M604 444.8 C604.6 448.6 605.6 449.6 609.4 450.2 C605.6 450.8 604.6 451.8 604 455.6 C603.4 451.8 602.4 450.8 598.6 450.2 C602.4 449.6 603.4 448.6 604 444.8Z"/>
<path d="M610.4 456.6 C611.3 462.6 612.9 464.2 618.9 465.1 C612.9 466 611.3 467.6 610.4 473.6 C609.5 467.6 607.9 466 601.9 465.1 C607.9 464.2 609.5 462.6 610.4 456.6Z"/></g>
<!-- star bubble -->
<g transform="translate(607.7 309.3) rotate(11.8)">
<path d="M-19 20 L-8.7 29 L-3 21Z" fill="#676cb5"/>
<rect x="-33" y="-23" width="66" height="46" rx="11" fill="url(#bub)"/>
<path d="M-31 14 C-20 24 24 24 31 14 C28 22 24 23 22 23 H-22 C-24 23 -28 22 -31 14Z" fill="#5d62ab" opacity="0.55"/>
<ellipse cx="-6" cy="-13" rx="22" ry="7" fill="url(#hl)" opacity="0.35"/>
<ellipse cx="25" cy="-12" rx="3.4" ry="2.6" fill="#fff" opacity="0.45" filter="url(#blur1)"/>
<g transform="translate(-0.6 1.2) rotate(-6)"><path d="M0.00 -9.00 L2.88 -3.96 L8.56 -2.78 L4.66 1.51 L5.29 7.28 L0.00 4.90 L-5.29 7.28 L-4.66 1.51 L-8.56 -2.78 L-2.88 -3.96Z" fill="#34456f" stroke="#34456f" stroke-width="4.4" stroke-linejoin="round" transform="translate(0.3 0.4)"/><path d="M0.00 -9.00 L2.88 -3.96 L8.56 -2.78 L4.66 1.51 L5.29 7.28 L0.00 4.90 L-5.29 7.28 L-4.66 1.51 L-8.56 -2.78 L-2.88 -3.96Z" fill="#72e0ab" stroke="#72e0ab" stroke-width="2.6" stroke-linejoin="round"/><path d="M0.00 -9.00 L2.88 -3.96 L8.56 -2.78 L4.66 1.51 L5.29 7.28 L0.00 4.90 L-5.29 7.28 L-4.66 1.51 L-8.56 -2.78 L-2.88 -3.96Z" fill="#8ef0c0" opacity="0.5" transform="translate(-0.8 -0.8) scale(0.6)"/></g>
</g>
<!-- heart bubble right -->
<g transform="translate(614.75 360.25) rotate(-9.9)">
<path d="M2.5 14.5 L7.5 19.8 L12.5 13.5Z" fill="#656ab2"/>
<rect x="-22.9" y="-15.9" width="45.8" height="31.8" rx="8" fill="url(#bub2)"/>
<path d="M-21 9 C-12 17 14 17 21 9 C19 15 17 15.9 15 15.9 H-15 C-17 15.9 -19 15 -21 9Z" fill="#5d62ab" opacity="0.5"/>
<ellipse cx="4" cy="-8.5" rx="12" ry="3.2" fill="#fff" opacity="0.28" filter="url(#blur1)"/>
<ellipse cx="-17" cy="-7" rx="1.6" ry="2.6" fill="#fff" opacity="0.45" filter="url(#blur1)"/>
<g transform="translate(-0.6 0.4) rotate(8)"><path d="M0 7.4 C-9 1.4 -8.6 -5.8 -4 -6.4 C-1.8 -6.6 -0.5 -5.2 0 -4 C0.5 -5.2 1.8 -6.6 4 -6.4 C8.6 -5.8 9 1.4 0 7.4Z" fill="#5d3c9a" transform="scale(1.18)"/><path d="M0 7.4 C-9 1.4 -8.6 -5.8 -4 -6.4 C-1.8 -6.6 -0.5 -5.2 0 -4 C0.5 -5.2 1.8 -6.6 4 -6.4 C8.6 -5.8 9 1.4 0 7.4Z" fill="url(#heartg)" transform="scale(0.94)"/></g>
</g>
<!-- dots bubble -->
<g transform="translate(293.8 393) rotate(19.5)">
<path d="M-24 8 L-11.5 21.2 L-4 16Z" fill="#666bb3"/>
<rect x="-25.7" y="-17" width="51.4" height="34" rx="8.5" fill="url(#bub)"/>
<path d="M-24 9 C-14 18 16 18 24 9 C22 16 19 17 17 17 H-17 C-19 17 -22 16 -24 9Z" fill="#5d62ab" opacity="0.5"/>
<ellipse cx="-2" cy="-8" rx="14" ry="3.4" fill="#fff" opacity="0.22" filter="url(#blur1)"/>
<g fill="#4d5199"><circle cx="-7.8" cy="-2.6" r="2.9"/><circle cx="0" cy="-2.6" r="2.9"/><circle cx="7.8" cy="-2.6" r="2.9"/></g>
<g fill="#f3f1ff"><circle cx="-7.5" cy="-1.9" r="1.7"/><circle cx="0.3" cy="-1.9" r="1.7"/><circle cx="8.1" cy="-1.9" r="1.7"/></g>
</g>
<!-- heart bubble left -->
<g transform="translate(309.5 442.3) rotate(-14.3)">
<path d="M-15 17 L-7.3 25.2 L0 18Z" fill="#656ab2"/>
<rect x="-29.7" y="-19.75" width="59.4" height="39.5" rx="10" fill="url(#bub2)"/>
<path d="M-28 11 C-16 22 18 22 28 11 C26 18.5 23 19.75 20 19.75 H-20 C-23 19.75 -26 18.5 -28 11Z" fill="#5d62ab" opacity="0.5"/>
<ellipse cx="6" cy="-11" rx="15" ry="4" fill="#fff" opacity="0.3" filter="url(#blur1)"/>
<ellipse cx="-19" cy="4" rx="4" ry="9" fill="#9aa3e4" opacity="0.5" filter="url(#blur1)"/>
<g transform="translate(-0.8 -1) rotate(12)"><path d="M0 7.4 C-9 1.4 -8.6 -5.8 -4 -6.4 C-1.8 -6.6 -0.5 -5.2 0 -4 C0.5 -5.2 1.8 -6.6 4 -6.4 C8.6 -5.8 9 1.4 0 7.4Z" fill="#5d3c9a" transform="scale(1.5)"/><path d="M0 7.4 C-9 1.4 -8.6 -5.8 -4 -6.4 C-1.8 -6.6 -0.5 -5.2 0 -4 C0.5 -5.2 1.8 -6.6 4 -6.4 C8.6 -5.8 9 1.4 0 7.4Z" fill="url(#heartg)" transform="scale(1.26)"/></g>
</g>
</svg>
<div class="abs stitle" style="left:249px;top:212.2px;width:200px"><b>Boost Your<br>Brand's Voice –</b><br><span class="reg">Social Media<br>Strategy</span></div>
<div class="abs" style="left:249px;top:334.2px;width:200px;text-align:center;font-size:7.5px;color:#4f4a63;white-space:nowrap;letter-spacing:0.03px">Here is where your presentation begins</div>
<!-- Slidesgo sidebar (rel. to card) -->
<div class="abs" style="left:544.6px;top:22px;width:198.4px;height:460px;background:#fff;border-left:0.7px solid #dcdde1"></div>
<div class="abs" style="left:544.6px;top:22px;width:198.4px;height:23.6px;background:#616161"></div>
<div class="abs" style="left:553.2px;top:28.4px;font-size:8.6px;font-weight:bold;color:#fff;letter-spacing:-0.25px">Slidesgo</div>
<svg class="abs" style="left:721.4px;top:29.4px" width="10" height="10" viewBox="0 0 10 10" stroke="#fff" stroke-width="0.9" fill="none"><path d="M1.6 1.6 L8.4 8.4 M8.4 1.6 L1.6 8.4"/></svg>
<div class="abs" style="left:544.6px;top:45.6px;width:187.4px;height:37px;background:#8c62a0"></div>
<!-- logo -->
<svg class="abs" style="left:548px;top:54px" width="20" height="20" viewBox="0 0 20 20" fill="none" stroke="#fff" stroke-width="2.7" stroke-linejoin="miter"><path d="M16.2 7.2 L9.8 3.6 L3.6 7.2 L16.2 13.2 L9.8 16.8 L3.6 13.2"/></svg>
<div class="abs" style="left:573px;top:53.6px;width:109px;height:21px;background:#fff;border-radius:1.5px"></div>
<svg class="abs" style="left:577px;top:56px" width="16" height="16" viewBox="0 0 16 16" fill="none" stroke="#8a8a8a" stroke-width="1"><circle cx="6.1" cy="7.2" r="4"/><path d="M9 10.2 L12 13.4"/></svg>
<div class="abs" style="left:594.6px;top:59.2px;font-size:8.6px;color:#a2a2a2;white-space:nowrap;letter-spacing:-0.12px">Search a template</div>
<!-- filter icon -->
<svg class="abs" style="left:686px;top:54px" width="20" height="20" viewBox="0 0 20 20" fill="none" stroke="#fff" stroke-width="1"><path d="M3 5.2 H5.4 M8.4 5.2 H15.8 M3 9.9 H10.6 M13.6 9.9 H15.8 M3 14.6 H5.4 M8.4 14.6 H15.8"/><circle cx="6.9" cy="5.2" r="1.5"/><circle cx="12.1" cy="9.9" r="1.5"/><circle cx="6.9" cy="14.6" r="1.5"/></svg>
<!-- user icon -->
<svg class="abs" style="left:707px;top:52px" width="24" height="24" viewBox="0 0 24 24" fill="none" stroke="#fff" stroke-width="1.3" stroke-linejoin="round"><path d="M9.3 11.6 A4.5 4.5 0 1 1 13.9 11.6 C15.4 13.6 19.4 14.4 20.4 19.8 H2.8 C3.8 14.4 7.8 13.6 9.3 11.6Z"/></svg>
<!-- scrollbar -->
<div class="abs" style="left:732px;top:45.2px;width:11px;height:440px;background:#f1f1f1"></div>
<div class="abs" style="left:733.3px;top:57px;width:8.3px;height:87.4px;background:#c1c1c1"></div>
<svg class="abs" style="left:733px;top:48px" width="9" height="7" viewBox="0 0 9 7"><path d="M1.6 5 L4.5 2 L7.4 5Z" fill="#a6a6a6"/></svg>
<!-- Trending -->
<div class="abs sh" style="left:555.5px;top:95.1px">Trending searches</div>
<div class="abs" style="left:696px;top:96.2px;font-size:8.4px;color:#9567ad;white-space:nowrap">+ More</div>
<!-- cards -->
<div class="tcard" style="left:555px;top:119.5px;background:#7c8288">
 <div class="abs" style="left:6.9px;top:8.6px;font-size:4.5px;line-height:5.4px;color:#3b4147;white-space:nowrap">Cost Reduction in<br>Manufacturing<br>Industry<br>Meeting</div>
 <div class="abs" style="left:6.9px;top:35.3px;width:13px;height:0.6px;background:#50565c"></div><div class="abs" style="left:6.9px;top:37.6px;width:14px;height:0.6px;background:#50565c"></div>
 <svg class="abs" style="left:0;top:0" width="80" height="48" viewBox="0 0 80 48"><path d="M48.5 40 C47 34 52 30.5 57 31.5 C59 29 64 29.5 65.5 33 L66 43 H51 C49.5 43 48.8 42 48.5 40Z" fill="#80949a"/><circle cx="60" cy="24.5" r="3.4" fill="#8599a0"/><circle cx="68.4" cy="16.4" r="2" fill="#8f7a6e"/><path d="M66.3 15.6 C66.5 13.6 70.4 13.4 70.6 15.8 L70 14.9 H66.8Z" fill="#22272c"/><path d="M65.8 19 H72.2 L73.4 27.6 H65.6Z" fill="#a3b5c6"/><path d="M66 22 L61.5 24.2" stroke="#a3b5c6" stroke-width="1.5"/><path d="M66.2 27.4 H73 L75.8 41.2 H72.8 L69.6 31 L68.2 41.6 H65Z" fill="#24292e"/><path d="M64.4 42.4 H68.6 M72.6 42 H76.8" stroke="#6e8890" stroke-width="1.2"/></svg>
 <span>Business</span></div>
<div class="tcard" style="left:642.5px;top:119.6px;background:#7b8192">
 <svg class="abs" style="left:0;top:0" width="80" height="48" viewBox="0 0 80 48"><ellipse cx="70" cy="2" rx="16" ry="7" fill="#80869a" opacity="0.7"/><ellipse cx="6" cy="46" rx="12" ry="6" fill="#80869a" opacity="0.7"/><circle cx="14.4" cy="6.6" r="2.7" fill="#2f2d35"/><path d="M9.4 11 C11 9.6 17.8 9.6 19.4 11 L23.6 25.6 L21.8 26.4 L18.8 18 L18.4 27 L18.8 45.6 H15.6 L14.4 30 L13.2 45.6 H10 L10.4 27 L10 18 L7 26.4 L5.2 25.6Z" fill="#2f2d35"/><path d="M14.4 10 V28 M14.4 19 L11.6 40 M14.4 19 L17.2 40 M14.4 13 L9 22 M14.4 13 L20 22" stroke="#7d3f44" stroke-width="0.55" fill="none"/><circle cx="15.6" cy="18.6" r="1.7" fill="#c0453f"/></svg>
 <div class="abs" style="left:28.6px;top:15.6px;font-size:5.1px;color:#3a3e4c;white-space:nowrap">Human Anatomy</div>
 <div class="abs" style="left:29px;top:29.6px;width:31px;height:0.9px;background:#8e9280"></div>
 <div class="abs" style="left:64px;top:6px;width:8.8px;height:2.4px;border-radius:0.6px;background:#8b8d7c"></div>
 <span>Education</span></div>
<div class="tcard" style="left:555px;top:174.7px;background:#7d8389">
 <svg class="abs" style="left:0;top:0" width="80" height="48" viewBox="0 0 80 48"><ellipse cx="10" cy="3" rx="15" ry="7" fill="#858b91"/><ellipse cx="66" cy="47" rx="12" ry="5" fill="#858b91"/><path d="M55 33.5 C60 30 66 26 80 20 V34 C72 35.5 66 41 61 39 C58 38 56 36 55 33.5Z" fill="#c6a88c"/><path d="M55 33.5 C58 31 63 31 66 33" stroke="#b89878" stroke-width="0.8" fill="none"/><circle cx="71.8" cy="33.9" r="2.6" fill="#a3494a"/><path d="M56 19.5 L68 22.8" stroke="#3c5560" stroke-width="1.3"/><circle cx="67" cy="19" r="0.9" fill="#c8a24a"/><circle cx="65" cy="38.6" r="0.8" fill="#c8a24a"/><circle cx="69" cy="23.5" r="0.7" fill="#5b8f86"/></svg>
 <div class="abs" style="left:6.9px;top:16.4px;font-size:5.3px;line-height:5.5px;font-weight:bold;color:#2c3950;white-space:nowrap;letter-spacing:-0.05px">Anti-Illicit Drugs<br>Campaign</div>
 <div class="abs" style="left:6.9px;top:30.9px;width:26px;height:0.6px;background:#4a5462"></div>
 <span>Marketing</span></div>
<div class="tcard" style="left:642.5px;top:174.7px;background:#7d838c">
 <div class="abs" style="left:6.7px;top:14.6px;font-size:4.7px;line-height:5.2px;color:#2f3c56;white-space:nowrap">Delirium in<br>Elderly Patients<br>Breakthrough</div>
 <div class="abs" style="left:6.7px;top:33.3px;width:33px;height:0.7px;background:#3f4a5e"></div>
 <div class="abs" style="left:45.4px;top:6.4px;width:18.3px;height:16.2px;border-radius:2.5px;overflow:hidden;background:#a9ab9c"><div class="abs" style="left:0;top:0;width:5px;height:17px;background:#6d6f62"></div><div class="abs" style="left:4.6px;top:6px;width:8.4px;height:11px;border-radius:3px 3px 0 0;background:#6ea0b2"></div><div class="abs" style="left:7px;top:2px;width:3.8px;height:4.4px;border-radius:2px;background:#5d4034"></div><div class="abs" style="left:14.6px;top:0;width:3.7px;height:17px;background:#8ea6a4"></div></div>
 <div class="abs" style="left:56.8px;top:22.5px;width:19.1px;height:19.8px;border-radius:2.5px;overflow:hidden;background:#9aa5a0"><div class="abs" style="left:15px;top:0;width:4.1px;height:20px;background:#a88a48"></div><div class="abs" style="left:4.4px;top:7px;width:9.6px;height:13px;border-radius:3.5px 3.5px 0 0;background:#5f8fa2"></div><div class="abs" style="left:7px;top:2.4px;width:4.2px;height:4.8px;border-radius:2.2px;background:#b89c88"></div></div>
 <span>Medical</span></div>
<!-- Popular themes -->
<div class="abs sh" style="left:555.3px;top:245.8px">Popular themes</div>
<div class="abs" style="left:555.8px;top:270.5px;width:166.6px;height:95px;border-radius:2.5px;background:#f3f0ec;overflow:hidden;box-shadow:0 0.5px 1.5px rgba(0,0,0,0.25)">
 <div class="abs" style="left:0;top:4.7px;width:100%;height:1.6px;background:#aba39d"></div>
 <div class="abs" style="left:0;top:88.7px;width:100%;height:1.6px;background:#aba39d"></div>
 <svg class="abs" style="left:0;top:0" width="168" height="95" viewBox="0 0 168 95" fill="none" stroke="#4b4340" stroke-width="0.6"><path d="M0 23.5 C18 21 24 5 41 0.8"/><path d="M132 94.5 C147 88 150 76 167.5 72.6"/></svg>
 <div class="abs mt2" style="left:0;top:25px;width:100%">Minimalist<br>Business Slides</div>
 <div class="abs" style="left:0;top:63.4px;width:100%;text-align:center;font-size:3.9px;color:#3e3836;letter-spacing:0.02px">Here is where your presentation begins</div>
</div>
<div class="cdot" style="left:593.2px;background:#f3efeb"></div><div class="cdot" style="left:611.8px;background:#e2e6f1"></div><div class="cdot" style="left:630.4px;background:#e8def2"></div><div class="cdot" style="left:648.8px;background:#dcebdb"></div><div class="cdot" style="left:666.8px;background:#f0dcea"></div>
<div class="abs" style="left:555.7px;top:372.6px;font-size:9.6px;color:#4a4a4a;white-space:nowrap;letter-spacing:0.05px">Minimalist Business Slides</div>
<!-- romantic -->
<div class="abs" style="left:555.8px;top:392.4px;width:166.6px;height:95px;border-radius:2.5px 2.5px 0 0;background:#ee9fef;overflow:hidden">
 <div class="abs" style="left:5.6px;top:4.6px;width:18.4px;height:18.6px;border-radius:1px;background:#4a4070"></div>
 <svg class="abs" style="left:9.6px;top:9.6px" width="10" height="9" viewBox="0 0 10 9"><path d="M0.6 2.2 L3 4.2 L5 1 L7 4.2 L9.4 2.2 L8.4 6.6 H1.6Z" fill="#fbb21c"/><rect x="1.6" y="7" width="6.8" height="1.1" fill="#f59a0c"/></svg>
 <svg class="abs" style="left:0;top:0" width="168" height="95" viewBox="0 0 168 95"><path d="M0 6 C-8 0 -7 -6.4 -3.4 -6.6 C-1.4 -6.6 -0.4 -5 0 -4 C0.4 -5 1.4 -6.6 3.4 -6.6 C7 -6.4 8 0 0 6Z" fill="#e8352f" transform="translate(43.7 16.3) rotate(-15) scale(0.58 0.8)"/><path d="M0 6 C-8 0 -7 -6.4 -3.4 -6.6 C-1.4 -6.6 -0.4 -5 0 -4 C0.4 -5 1.4 -6.6 3.4 -6.6 C7 -6.4 8 0 0 6Z" fill="#e8352f" transform="translate(134.1 12.3) rotate(12) scale(0.93 1.43)"/><path d="M0 6 C-8 0 -7 -6.4 -3.4 -6.6 C-1.4 -6.6 -0.4 -5 0 -4 C0.4 -5 1.4 -6.6 3.4 -6.6 C7 -6.4 8 0 0 6Z" fill="#e93a35" transform="translate(150.7 39.7) rotate(15) scale(1.43 1.9)"/><path d="M0 6 C-8 0 -7 -6.4 -3.4 -6.6 C-1.4 -6.6 -0.4 -5 0 -4 C0.4 -5 1.4 -6.6 3.4 -6.6 C7 -6.4 8 0 0 6Z" fill="#ea4640" transform="translate(21.4 39.7) rotate(-20) scale(1.0 2.15)"/><path d="M0 6 C-8 0 -7 -6.4 -3.4 -6.6 C-1.4 -6.6 -0.4 -5 0 -4 C0.4 -5 1.4 -6.6 3.4 -6.6 C7 -6.4 8 0 0 6Z" fill="#e8352f" transform="translate(18.3 76.8) rotate(-5) scale(1.07 1.35)"/><path d="M0 6 C-8 0 -7 -6.4 -3.4 -6.6 C-1.4 -6.6 -0.4 -5 0 -4 C0.4 -5 1.4 -6.6 3.4 -6.6 C7 -6.4 8 0 0 6Z" fill="#e8352f" transform="translate(121.5 77.5) rotate(-15) scale(0.64 0.87)"/><path d="M0 6 C-8 0 -7 -6.4 -3.4 -6.6 C-1.4 -6.6 -0.4 -5 0 -4 C0.4 -5 1.4 -6.6 3.4 -6.6 C7 -6.4 8 0 0 6Z" fill="#e8352f" transform="translate(149.3 76.2) rotate(8) scale(1.07 1.43)"/><path d="M146.6 73 L149.3 79 L152 73" fill="none" stroke="#f59aa8" stroke-width="1.2"/><ellipse cx="18" cy="36" rx="2" ry="5" fill="#f2726a" opacity="0.6" transform="rotate(-20 18 36)"/><ellipse cx="147" cy="36" rx="3" ry="5" fill="#f2726a" opacity="0.5" transform="rotate(15 147 36)"/></svg>
 <div class="abs rom" style="left:0;top:19.4px;width:100%">Romantic<br>Relationship<br>Minitheme</div>
 <div class="abs" style="left:59px;top:76.6px;width:71px;height:3px;background:#f7c6f6;opacity:0.7"></div>
 <div class="abs" style="left:45.6px;top:66.4px;width:76.4px;height:10.2px;background:#fff;text-align:center;font-size:3.7px;line-height:10.2px;color:#222;white-space:nowrap">Here is where your presentation <b>begins</b></div>
</div>
<!-- icon rail -->
<div class="abs" style="left:743px;top:0;width:34px;height:478px;background:#f9fafd"></div>
<svg class="abs" style="left:754px;top:32px" width="16" height="16" viewBox="0 0 16 16"><rect x="1.4" y="1.4" width="12.6" height="12.6" rx="1.6" fill="#4285f4"/><rect x="11" y="1.4" width="3" height="9.6" fill="#fbbc04"/><rect x="1.4" y="11" width="9.6" height="3" fill="#34a853"/><path d="M11 11 H14 L11 14Z" fill="#ea4335"/><rect x="11" y="1.4" width="3" height="2.2" fill="#1967d2"/><rect x="4.2" y="4.2" width="6.8" height="6.8" fill="#fff"/><text x="7.6" y="9.6" font-family="Liberation Sans" font-size="5" font-weight="bold" fill="#4285f4" text-anchor="middle" letter-spacing="-0.3">31</text></svg>
<svg class="abs" style="left:754px;top:69px" width="16" height="16" viewBox="0 0 16 16"><rect x="1.3" y="1.3" width="12.8" height="12.8" rx="1.6" fill="#fbbc04"/><path d="M7.7 3.6 A2.9 2.9 0 0 1 9.3 8.9 V9.9 H6.1 V8.9 A2.9 2.9 0 0 1 7.7 3.6Z M6.3 10.7 H9.1 V11.5 H6.3Z" fill="#fff"/></svg>
<svg class="abs" style="left:754px;top:106px" width="16" height="16" viewBox="0 0 16 16" fill="none" stroke="#1a73e8" stroke-width="1.5"><path d="M12.6 7.4 A4.9 4.9 0 1 1 10.4 3.6"/><path d="M5.4 7.6 L7.5 9.6 L11.6 5" stroke-linecap="round" stroke-linejoin="round"/><circle cx="12.2" cy="3" r="1.1" fill="#1a73e8" stroke="none"/></svg>
<svg class="abs" style="left:754px;top:142px" width="16" height="16" viewBox="-1.4 -1.6 18.6 18.6" fill="#1a73e8"><circle cx="7.6" cy="4.8" r="2.6"/><path d="M3 13.4 V11.2 C3 9 5.4 8.2 7.6 8.2 C9.8 8.2 12.2 9 12.2 11.2 V13.4Z" fill="#185abc"/><path d="M4.2 13.4 V11.4 C4.2 9.6 6 9 7.6 9 C9.2 9 11 9.6 11 11.4 V13.4Z"/></svg>
<svg class="abs" style="left:754px;top:179.6px" width="16" height="16" viewBox="-1.9 -2 19.6 19.6"><path d="M7.6 1.6 C5 1.6 3.2 3.5 3.2 5.9 C3.2 9 7.6 14.4 7.6 14.4 C7.6 14.4 12 9 12 5.9 C12 3.5 10.2 1.6 7.6 1.6Z" fill="#34a853"/><path d="M7.6 1.6 C5 1.6 3.2 3.5 3.2 5.9 C3.2 6.8 3.5 7.8 4 8.8 L9.6 2.2 C9 1.8 8.3 1.6 7.6 1.6Z" fill="#ea4335"/><path d="M9.6 2.2 L7.6 4.6 L10.6 7.4 L11.6 4.6 C11.3 3.6 10.6 2.7 9.6 2.2Z" fill="#4285f4"/><path d="M4 8.8 C4.6 10 5.4 11.2 6.2 12.4 L10.8 7 L9 5.2Z" fill="#fbbc04"/><circle cx="7.6" cy="5.9" r="1.6" fill="#fff"/></svg>
<div class="abs" style="left:755px;top:216.8px;width:13px;height:0.8px;background:#dadce0"></div>
<svg class="abs" style="left:754px;top:238.5px" width="16" height="16" viewBox="0 0 16 16" stroke="#1f1f1f" stroke-width="1.2" fill="none"><path d="M2.8 7.8 H12.6 M7.7 2.9 V12.7"/></svg>

</div>

<div id="rpanel">
<div class="abs" style="left:0;top:0;width:249px;height:33.1px;background:#616161"></div>
<div class="abs" style="left:7.8px;top:9.8px;font-size:11.7px;font-weight:bold;color:#fff;letter-spacing:-0.2px">Slidesgo</div>
<svg class="abs" style="left:218.8px;top:13px" width="12" height="12" viewBox="0 0 12 12" stroke="#fff" stroke-width="1.15" fill="none"><path d="M1.8 1.8 L10.2 10.2 M10.2 1.8 L1.8 10.2"/></svg>
<div class="abs" style="left:10.6px;top:40.4px;font-size:12px;line-height:16.9px;color:#5a5a5a;white-space:nowrap;letter-spacing:0.01px">Select the slides you want to add and click<br>on "Insert slides" at the bottom.</div>
<div class="abs" style="left:10.6px;top:82.9px;font-size:11.1px;font-weight:bold;color:#333;white-space:nowrap">Available colors</div>
<div class="rdot" style="left:10.4px;background:#f3efec"></div>
<div class="rdot" style="left:36.6px;background:#e2e6f1"></div>
<div class="rdot selr" style="left:62.8px;background:#e9dff2"></div>
<div class="rdot" style="left:89px;background:#dcecdc"></div>
<div class="rdot" style="left:115px;background:#f2dceb"></div>

<!-- slide 1 -->
<div class="rs" style="top:146.7px">
 <div class="ln" style="top:6.6px"></div><div class="ln" style="top:117.4px"></div>
 <svg class="abs" style="left:0;top:0" width="221" height="125" viewBox="0 0 221 125" fill="none" stroke="#5c4e58" stroke-width="0.7"><path d="M0 31 C26 27 32 6 55 0.6"/><path d="M174 124.4 C194 116 198 100 221 95.6"/></svg>
 <div class="abs big" style="left:0;top:33.7px;width:100%">Minimalist<br>Business Slides</div>
 <div class="abs" style="left:0;top:81.4px;width:100%;text-align:center;font-size:5.4px;color:#3d3340;letter-spacing:0.05px">Here is where your presentation begins</div>
 <div class="cb on" style="top:8px"></div>
</div>
<!-- slide 2 -->
<div class="rs" style="top:289.8px">
 <div class="ln" style="top:7.9px"></div><div class="ln" style="top:118.4px"></div>
 <svg class="abs" style="left:0;top:0" width="221" height="125" viewBox="0 0 221 125" fill="none" stroke="#5c4e58" stroke-width="0.7"><path d="M179 1.2 C198 8 200 24 221 30"/></svg>
 <div class="abs ttl" style="left:19.6px;top:15.4px">Contents of this template</div>
 <div class="abs tiny" style="left:19.6px;top:35px">Here's what you'll find in this <b>Slidesgo</b> template:</div>
 <div class="abs tiny" style="left:30.6px;top:42.6px;line-height:4.02px">
A slide structure based on a multi-business XL template, which you can easily adapt to your needs.<br>
For more info on how to edit the template, please visit <b>Slidesgo School</b> or read our <b>FAQs</b>.<br>
To view this template in PowerPoint with the correct fonts, download and install on your computer<br>
<b>the fonts that we have used</b>. You can learn how to download and install fonts <b>here</b>.<br>
An assortment of graphic resources that are suitable for use in the presentation can be found in the<br>
<b>alternative resources</b> slides.<br>
A <b>thanks</b> slide, which you must keep so that proper credits for our design are given.<br>
Several <b>resources</b> slides, where you'll find links to all the elements used in the template.<br>
<b>Instructions for use</b>.<br>
Final slides with:<br>
<span style="padding-left:11.2px">The <b>fonts and colors</b> used in the template.</span><br>
<span style="padding-left:11.2px">A selection of <b>illustrations</b>. You can also customize and animate them as you wish with the</span><br>
<span style="padding-left:11.2px">online editor. Visit <b>Storyset</b> to find more.</span><br>
<span style="padding-left:11.2px">More <b>infographic resources</b>, whose size and color can be edited.</span><br>
<span style="padding-left:11.2px">Sets of <b>customizable icons</b> of the following themes: general, business, avatar, creative process,</span><br>
<span style="padding-left:11.2px">education, help &amp; support, medical, nature, performing arts, SEO &amp; marketing, and teamwork.</span></div>
 <svg class="abs" style="left:0;top:0" width="221" height="125" viewBox="0 0 221 125" fill="#2e2630"><circle cx="24.4" cy="44.9" r="0.55"/><circle cx="24.4" cy="52.9" r="0.55"/><circle cx="24.4" cy="61.0" r="0.55"/><circle cx="24.4" cy="69.0" r="0.55"/><circle cx="24.4" cy="73.0" r="0.55"/><circle cx="24.4" cy="77.0" r="0.55"/><circle cx="24.4" cy="81.1" r="0.55"/>
 <rect x="35" y="84.6" width="1" height="1"/><rect x="35" y="88.6" width="1" height="1"/><rect x="35" y="96.6" width="1" height="1"/><rect x="35" y="100.7" width="1" height="1"/></svg>
 <div class="abs tiny" style="left:19.6px;top:110.6px">You can delete this slide when you're done editing the presentation.</div>
 <div class="cb" style="top:8.8px"></div>
</div>
<!-- slide 3 -->
<div class="rs" style="top:434.5px">
 <div class="ln" style="top:6.6px"></div><div class="ln" style="top:117.6px"></div>
 <div class="abs ttl" style="left:19.6px;top:14.2px">Table of contents</div>
 <div class="abs nn" style="left:26px;top:37.4px">01</div><div class="abs hh" style="left:48.5px;top:36.9px">Introduction</div><div class="abs dd" style="left:48.5px;top:45.9px">You can describe the<br>topic of the section here</div>
 <div class="abs nn" style="left:120.4px;top:37.4px">02</div><div class="abs hh" style="left:143.1px;top:36.9px">Company</div><div class="abs dd" style="left:143.1px;top:45.9px">You can describe the<br>topic of the section here</div>
 <div class="abs nn" style="left:25.6px;top:79.8px">03</div><div class="abs hh" style="left:48.5px;top:79.1px">Analysis</div><div class="abs dd" style="left:48.5px;top:88.3px">You can describe the<br>topic of the section here</div>
 <div class="abs nn" style="left:120.4px;top:79.8px">04</div><div class="abs hh" style="left:143.1px;top:79.1px">Conclusion</div><div class="abs dd" style="left:143.1px;top:88.3px">You can describe the<br>topic of the section here</div>
 <div class="cb on" style="top:7px"></div>
</div>
<!-- slide 4 -->
<div class="rs" style="top:578.2px">
 <div class="ln" style="top:6.8px"></div>
 <svg class="abs" style="left:0;top:0" width="221" height="125" viewBox="0 0 221 125" fill="none" stroke="#5c4e58" stroke-width="0.7"><path d="M186 0.8 C204 7 206 22 221 27"/></svg>
 <div class="abs ttl" style="left:0;top:14.2px;width:100%;text-align:center">Table of contents</div>
 <div class="abs nn" style="left:35.6px;top:29.8px;width:20px;text-align:center">01</div><div class="abs nn" style="left:100.3px;top:29.8px;width:20px;text-align:center">02</div><div class="abs nn" style="left:164.3px;top:29.8px;width:20px;text-align:center">03</div>
 <div class="cb on" style="top:7.6px"></div>
</div>
<div class="abs" style="left:0;top:614.6px;width:249px;height:2px;background:linear-gradient(180deg,rgba(120,120,130,0),rgba(120,120,130,0.55))"></div>

</div>

<!-- cursor -->
<svg class="abs" style="left:690px;top:570px" width="50" height="65" viewBox="690 570 50 65"><path d="M698.1 579.1 L730.8 608.9 L717.8 610.6 L723 623.9 L714.4 627.8 L708.9 614.4 L698.1 623.9Z" fill="#51305a"/></svg>
</div>
</body>
</html>
